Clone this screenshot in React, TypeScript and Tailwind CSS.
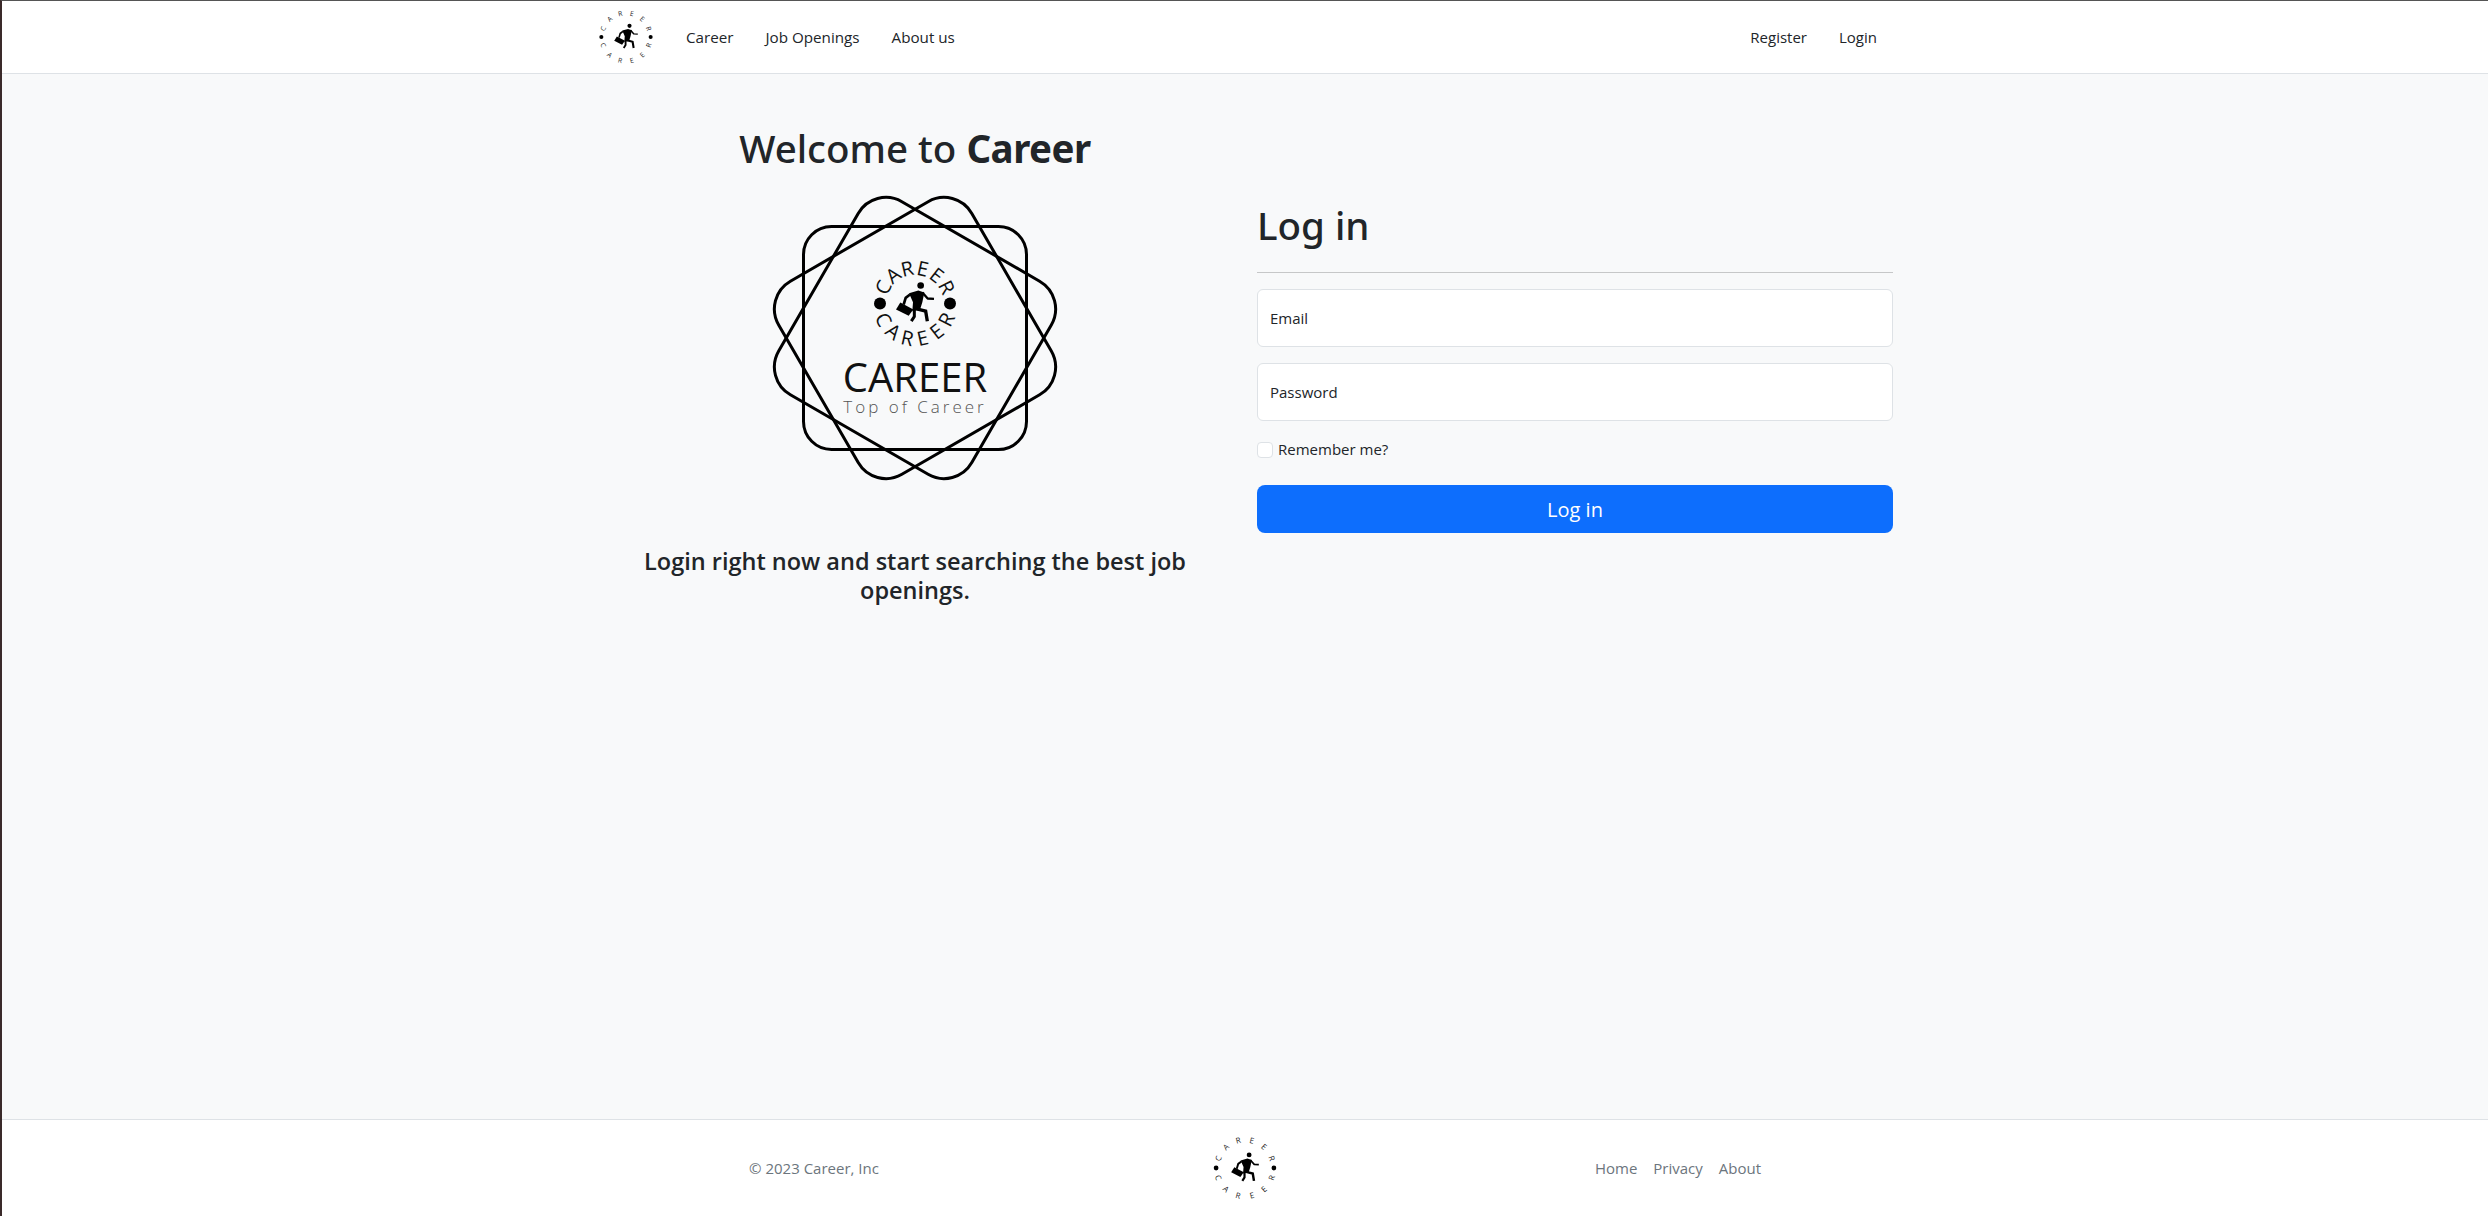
import React from 'react';

const navLinks = ["Career", "Job Openings", "About us"];
const word = "CAREER".split("");

// little man with the briefcase, drawn around 0,0 (middle of the ring)
const Runner: React.FC<{ scale: number }> = ({ scale }) => (
    <g transform={`scale(${scale}) translate(-90 -99)`} fill="#000" stroke="#000">
        <circle cx="107" cy="45" r="10" stroke="none" />
        <path d="M72 68 L100 60 L118 66 L112 95 L105 118 L82 122 L84 95 Z" stroke="none" />
        <path d="M112 66 L128 84 L147 85" fill="none" strokeWidth="7" strokeLinejoin="round" />
        <path d="M75 72 L62 82 L56 102" fill="none" strokeWidth="8" strokeLinejoin="round" />
        <path d="M95 115 L122 122 L127 152" fill="none" strokeWidth="10" />
        <path d="M88 118 L88 138 L79 152" fill="none" strokeWidth="9" />
        <path d="M46 96 L85 117 L71 136 L33 117 Z" stroke="none" />
    </g>
);

// two rows of letters bent round the runner
const Ring: React.FC<{ size: number; step: number; first: number; top: number; bottom: number; fill: string }> = ({ size, step, first, top, bottom, fill }) => (
    <g fontSize={size} fill={fill} textAnchor="middle">
        {word.map((c, i) => (
            <text key={`t${i}`} transform={`rotate(${first + step * i}) translate(0 ${-top})`}>{c}</text>
        ))}
        {word.map((c, i) => (
            <text key={`b${i}`} transform={`rotate(${-first - step * i}) translate(0 ${bottom})`}>{c}</text>
        ))}
    </g>
);

const SmallLogo: React.FC<{ size: number }> = ({ size }) => (
    <svg width={size} height={size} viewBox="-30 -30 60 60" className="font-['Open_Sans',sans-serif]">
        <circle cx="-25.5" cy="0" r="2.1" />
        <circle cx="25.5" cy="0" r="2.1" />
        <Ring size={7} step={28} first={-70} top={22.5} bottom={27.5} fill="#222" />
        <Runner scale={0.214} />
    </svg>
);

const BigLogo: React.FC = () => (
    <svg width="300" height="300" viewBox="-150 -150 300 300" className="font-['Open_Sans',sans-serif] shrink-0">
        <g fill="none" stroke="#000" strokeWidth="3">
            <rect x="-111.5" y="-111.5" width="223" height="223" rx="28" />
            <rect x="-111.5" y="-111.5" width="223" height="223" rx="32" transform="rotate(30)" />
            <rect x="-111.5" y="-111.5" width="223" height="223" rx="32" transform="rotate(60)" />
        </g>
        <g transform="translate(0 -34.5)">
            <circle cx="-35" cy="0" r="6" />
            <circle cx="35" cy="0" r="6" />
            <Ring size={20} step={25.2} first={-63} top={28.5} bottom={42.5} fill="#111" />
            <Runner scale={0.3333} />
        </g>
        <text x="0" y="54" fontSize="40" textAnchor="middle" fill="#111">CAREER</text>
        <text x="0" y="75" fontSize="17" fontWeight="300" textAnchor="middle" fill="#555" letterSpacing="3">Top of Career</text>
    </svg>
);

const App: React.FC = () => {
    return (
        <div className="flex flex-col h-[1216px] overflow-hidden bg-[#f8f9fa] text-[#212529] border-t border-t-[#555] border-l-2 border-l-[#3a2a2a] font-['Open_Sans',sans-serif] text-[15px]">
            <nav className="h-[73px] shrink-0 bg-white border-b border-[#dee2e6]">
                <div className="w-[1296px] mx-auto flex items-center justify-between h-full">
                    <div className="flex items-center">
                        <SmallLogo size={58} />
                        <ul className="flex gap-[32px] ml-[31px] text-[15.2px]">
                            {navLinks.map((link) => (
                                <li key={link}><a href="#">{link}</a></li>
                            ))}
                        </ul>
                    </div>
                    <ul className="flex gap-[32px] mr-[16px]">
                        <li><a href="#">Register</a></li>
                        <li><a href="#">Login</a></li>
                    </ul>
                </div>
            </nav>

            <main className="flex-1 w-[1296px] mx-auto flex gap-[24px]">
                <section className="w-[636px] flex flex-col items-center pt-[50px]">
                    <h1 className="text-[38.5px] leading-[48px] font-['Noto_Sans',sans-serif] font-medium">Welcome to <b className="font-bold tracking-[-0.5px]">Career</b></h1>
                    <div className="mt-[16px]"><BigLogo /></div>
                    <h4 className="mt-[59px] text-[23.5px] leading-[29px] font-semibold text-center">
                        Login right now and start searching the best job openings.
                    </h4>
                </section>
                <section className="w-[636px] pt-[127px]">
                    <h1 className="text-[38.5px] leading-[48px] font-['Noto_Sans',sans-serif] font-medium">Log in</h1>
                    <hr className="mt-[23px] mb-[16px] border-[#c6c7c8]" />
                    <form className="flex flex-col gap-[16px]">
                        <input type="email" placeholder="Email" className="h-[58px] w-full px-[12px] bg-white border border-[#dee2e6] rounded-md placeholder:text-[#212529]" />
                        <input type="password" placeholder="Password" className="h-[58px] w-full px-[12px] bg-white border border-[#dee2e6] rounded-md placeholder:text-[#212529]" />
                        <label className="flex items-center gap-[5px] mt-[2px] h-[21px]">
                            <input type="checkbox" className="appearance-none w-[16px] h-[16px] bg-white border border-[#dee2e6] rounded-[4px]" />
                            Remember me?
                        </label>
                        <button type="button" className="h-[48px] mt-[9px] pt-[1px] w-full bg-[#0d6efd] text-white text-xl rounded-lg">Log in</button>
                    </form>
                </section>
            </main>

            <footer className="h-[97px] shrink-0 bg-white border-t border-[#dee2e6]">
                <div className="w-[1320px] mx-auto grid grid-cols-3 h-full items-center text-[#6c757d]">
                    <p className="text-center pl-[18px]">© 2023 Career, Inc</p>
                    <div className="flex justify-center"><SmallLogo size={68} /></div>
                    <ul className="flex justify-center gap-[16px] pr-[14px]">
                        <li><a href="#">Home</a></li>
                        <li><a href="#">Privacy</a></li>
                        <li><a href="#">About</a></li>
                    </ul>
                </div>
            </footer>
        </div>
    );
};

export default App;
